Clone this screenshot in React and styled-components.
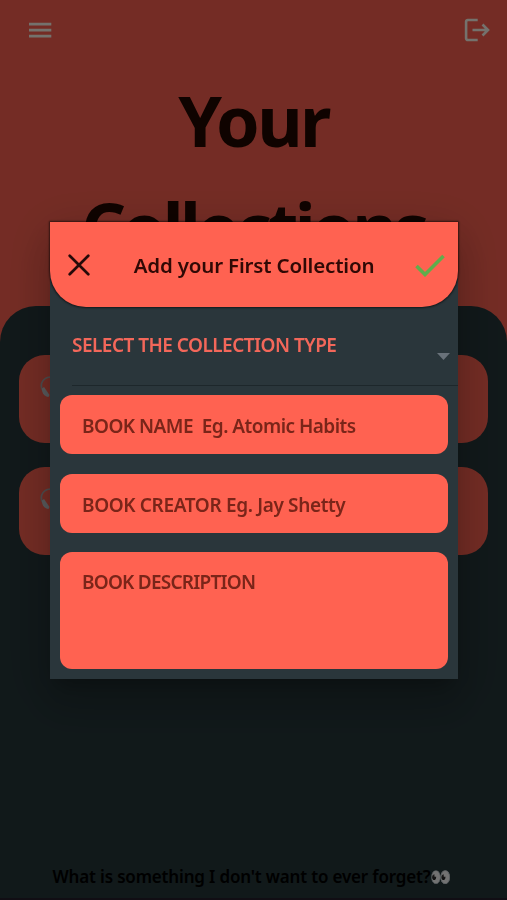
import styled, { createGlobalStyle } from "styled-components";

const GlobalStyle = createGlobalStyle`
  * {
    box-sizing: border-box;
  }

  body {
    margin: 0;
    font-family: "Noto Sans", sans-serif;
    overflow: hidden;
  }
`;

const Page = styled.div`
  display: flex;
  flex-direction: column;
  height: 900px;
  background-color: #ff6251;
`;

const Toolbar = styled.header`
  display: flex;
  justify-content: space-between;
  align-items: center;
  height: 60px;
  padding: 0 16px 0 27px;
`;

const Title = styled.h1`
  display: flex;
  flex-direction: column;
  align-items: center;
  height: 246px;
  margin: 0;
  padding-top: 7px;
  font-size: 70px;
  font-weight: 700;
  line-height: 107px;
  color: #220800;
`;

const TitleLine = styled.span`
  letter-spacing: ${({ spacing }) => spacing}px;
`;

const Sheet = styled.main`
  flex: 1;
  display: flex;
  flex-direction: column;
  gap: 24.4px;
  padding: 49px 18.6px 0 19.4px;
  border-radius: 36px 36px 0 0;
  border-bottom: 2px solid #261f2c;
  background-color: #26373a;
`;

const CollectionCard = styled.div`
  height: 88px;
  padding: 20px 21px;
  border-radius: 26px;
  background-color: #ff6251;
`;

const Prompt = styled.p`
  display: flex;
  align-items: center;
  margin: auto 0 8px 33.2px;
  font-size: 17px;
  font-weight: 600;
  line-height: 26px;
  letter-spacing: ${({ spacing }) => spacing}px;
  white-space: nowrap;
  color: #000000;
`;

const Overlay = styled.div`
  position: fixed;
  inset: 0;
  display: flex;
  justify-content: center;
  align-items: flex-start;
  padding: 222px 0 0 1px;
  background-color: rgba(0, 0, 0, 0.545);
`;

const Dialog = styled.form`
  display: flex;
  flex-direction: column;
  width: 408px;
  height: 457px;
  background-color: #2a363b;
  box-shadow:
    0 11px 15px -7px rgba(0, 0, 0, 0.2),
    0 24px 38px 3px rgba(0, 0, 0, 0.14),
    0 9px 46px 8px rgba(0, 0, 0, 0.12);
`;

const DialogHeader = styled.div`
  display: flex;
  align-items: center;
  justify-content: space-between;
  height: 85px;
  padding: 0 13px 0 18px;
  border-radius: 0 0 36px 36px;
  background-color: #ff6251;
  box-shadow: 0 0 2px 1px rgba(0, 0, 0, 0.55);
`;

const DialogTitle = styled.h2`
  margin: 1px 0 0 3px;
  font-size: 20.5px;
  font-weight: 600;
  letter-spacing: ${({ spacing }) => spacing}px;
  white-space: nowrap;
  color: #300905;
`;

const IconButton = styled.button`
  display: flex;
  padding: 0;
  border: 0;
  background: none;
`;

const Select = styled.div`
  display: flex;
  justify-content: space-between;
  height: 79px;
  margin-left: 22px;
  padding: 24px 8px 0 0;
  border-bottom: 1px solid #1d272b;
`;

const SelectLabel = styled.span`
  font-size: 19px;
  font-weight: 600;
  line-height: 28px;
  letter-spacing: ${({ spacing }) => spacing}px;
  white-space: nowrap;
  color: #f3675a;
`;

const Caret = styled.span`
  width: 13px;
  height: 7px;
  margin-top: 22px;
  background-color: #69727a;
  clip-path: polygon(0 0, 100% 0, 50% 100%);
`;

const Fields = styled.div`
  display: flex;
  flex-direction: column;
  gap: 19.4px;
  padding: 9.2px 9.6px 0 9.5px;
`;

const Field = styled.div`
  height: ${({ tall }) => (tall ? 117.5 : 59)}px;
  padding: ${({ tall }) => (tall ? 16 : 17)}px 22.5px;
  border-radius: 12px;
  background-color: #ff6251;
`;

const Placeholder = styled.span`
  display: block;
  font-size: 19px;
  font-weight: 600;
  line-height: 28px;
  letter-spacing: ${({ spacing }) => spacing}px;
  white-space: pre;
  color: #7a2519;
`;

const collections = ["first", "second"];

const fields = [
  { text: "BOOK NAME  Eg. Atomic Habits", spacing: -0.53 },
  { text: "BOOK CREATOR Eg. Jay Shetty", spacing: -0.36 },
  { text: "BOOK DESCRIPTION", spacing: -0.77, tall: true },
];

function MenuIcon() {
  return (
    <svg width="26" height="20" viewBox="0 0 26 20" fill="#fffaf0">
      <path d="M2 2.7h22.3v2.9H2zM2 8.7h22.3v2.9H2zM2 14.7h22.3v2.9H2z" />
    </svg>
  );
}

function LogoutIcon() {
  return (
    <svg
      width="28"
      height="26"
      viewBox="0 0 28 26"
      fill="none"
      stroke="#fffaf0"
      strokeWidth="2.6"
    >
      <path d="M14.7 3H4.8a1.7 1.7 0 0 0-1.7 1.7v16.6A1.7 1.7 0 0 0 4.8 23h9.9M9.5 13h15.3M19.5 7.5 25 13l-5.5 5.5" />
    </svg>
  );
}

function HeadphonesIcon() {
  return (
    <svg width="22" height="24" viewBox="0 0 22 24" fill="none">
      <path
        d="M2.5 15C-1 8 4 2 11 2s12 6 8.5 13"
        stroke="#aaa9ab"
        strokeWidth="1.7"
      />
      <path d="M2 13.5 4 12 9.5 20 8.5 22C5 22 1.5 18 2 13.5Z" fill="#c4c8cc" />
      <path d="M20 13.5 18 12 12.5 20 13.5 22C17 22 20.5 18 20 13.5Z" fill="#c4c8cc" />
    </svg>
  );
}

function CloseIcon() {
  return (
    <svg width="22" height="22" viewBox="0 0 22 22" stroke="#260a08" strokeWidth="2.7">
      <path d="M1.7 1.7 20.3 20.3M20.3 1.7 1.7 20.3" strokeLinecap="round" />
    </svg>
  );
}

function CheckIcon() {
  return (
    <svg width="30" height="24" viewBox="0 0 30 24" fill="none" stroke="#5fae4c" strokeWidth="3.6">
      <path d="M1.5 13 10 21.5 28.5 3" />
    </svg>
  );
}

export default function App() {
  return (
    <>
      <GlobalStyle />
      <Page>
        <Toolbar>
          <MenuIcon />
          <LogoutIcon />
        </Toolbar>
        <Title>
          <TitleLine spacing={-2.6}>Your</TitleLine>
          <TitleLine spacing={-3.6}>Collections</TitleLine>
        </Title>
        <Sheet>
          {collections.map((id) => (
            <CollectionCard key={id}>
              <HeadphonesIcon />
            </CollectionCard>
          ))}
          <Prompt spacing={-0.17}>
            What is something I don't want to ever forget?👀
          </Prompt>
        </Sheet>
      </Page>
      <Overlay>
        <Dialog>
          <DialogHeader>
            <IconButton type="button" aria-label="Close">
              <CloseIcon />
            </IconButton>
            <DialogTitle spacing={-0.17}>Add your First Collection</DialogTitle>
            <IconButton type="button" aria-label="Save">
              <CheckIcon />
            </IconButton>
          </DialogHeader>
          <Select>
            <SelectLabel spacing={-0.53}>SELECT THE COLLECTION TYPE</SelectLabel>
            <Caret />
          </Select>
          <Fields>
            {fields.map(({ text, spacing, tall }) => (
              <Field key={text} tall={tall}>
                <Placeholder spacing={spacing}>{text}</Placeholder>
              </Field>
            ))}
          </Fields>
        </Dialog>
      </Overlay>
    </>
  );
}
